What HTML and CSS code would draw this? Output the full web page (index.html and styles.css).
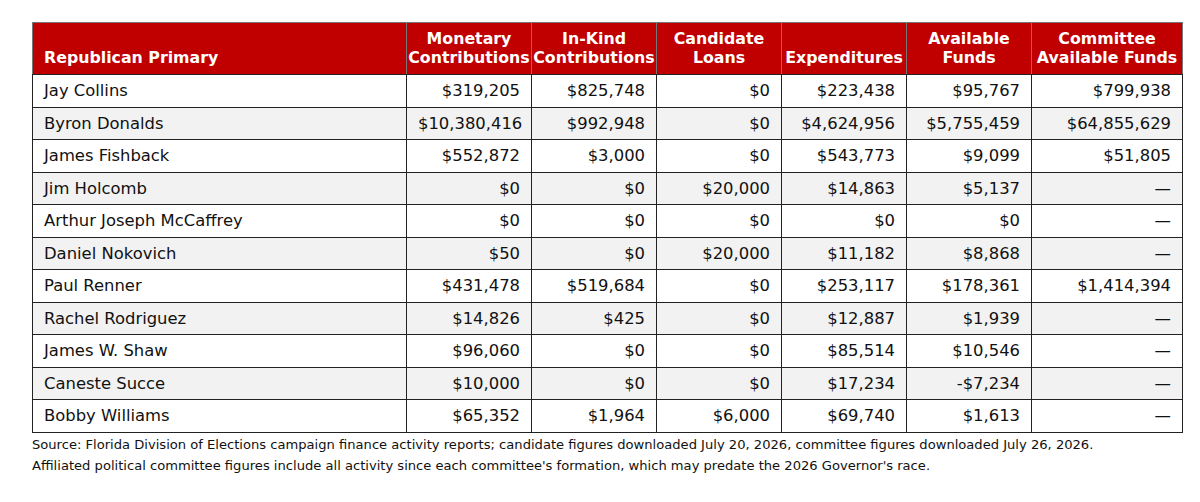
FILE: index.html
```html
<!DOCTYPE html>
<html>
<head>
    <meta name="viewport" content="width=device-width, initial-scale=1.0">
    <link rel="stylesheet" href="styles.css">
</head>
<body>
    <div class="wrap">
        <table class="finance">
            <colgroup>
                <col class="col-name">
                <col class="col-num">
                <col class="col-num">
                <col class="col-num">
                <col class="col-num">
                <col class="col-num">
                <col class="col-wide">
            </colgroup>
            <thead>
                <tr>
                    <th class="name">Republican Primary</th>
                    <th>Monetary<br>Contributions</th>
                    <th>In-Kind<br>Contributions</th>
                    <th>Candidate<br>Loans</th>
                    <th>Expenditures</th>
                    <th>Available<br>Funds</th>
                    <th>Committee<br>Available Funds</th>
                </tr>
            </thead>
            <tbody>
                <tr><td>Jay Collins</td><td>$319,205</td><td>$825,748</td><td>$0</td><td>$223,438</td><td>$95,767</td><td>$799,938</td></tr>
                <tr><td>Byron Donalds</td><td>$10,380,416</td><td>$992,948</td><td>$0</td><td>$4,624,956</td><td>$5,755,459</td><td>$64,855,629</td></tr>
                <tr><td>James Fishback</td><td>$552,872</td><td>$3,000</td><td>$0</td><td>$543,773</td><td>$9,099</td><td>$51,805</td></tr>
                <tr><td>Jim Holcomb</td><td>$0</td><td>$0</td><td>$20,000</td><td>$14,863</td><td>$5,137</td><td>—</td></tr>
                <tr><td>Arthur Joseph McCaffrey</td><td>$0</td><td>$0</td><td>$0</td><td>$0</td><td>$0</td><td>—</td></tr>
                <tr><td>Daniel Nokovich</td><td>$50</td><td>$0</td><td>$20,000</td><td>$11,182</td><td>$8,868</td><td>—</td></tr>
                <tr><td>Paul Renner</td><td>$431,478</td><td>$519,684</td><td>$0</td><td>$253,117</td><td>$178,361</td><td>$1,414,394</td></tr>
                <tr><td>Rachel Rodriguez</td><td>$14,826</td><td>$425</td><td>$0</td><td>$12,887</td><td>$1,939</td><td>—</td></tr>
                <tr><td>James W. Shaw</td><td>$96,060</td><td>$0</td><td>$0</td><td>$85,514</td><td>$10,546</td><td>—</td></tr>
                <tr><td>Caneste Succe</td><td>$10,000</td><td>$0</td><td>$0</td><td>$17,234</td><td>-$7,234</td><td>—</td></tr>
                <tr><td>Bobby Williams</td><td>$65,352</td><td>$1,964</td><td>$6,000</td><td>$69,740</td><td>$1,613</td><td>—</td></tr>
            </tbody>
        </table>
        <p class="note">Source: Florida Division of Elections campaign finance activity reports; candidate figures downloaded July 20, 2026, committee figures downloaded July 26, 2026.</p>
        <p class="note">Affiliated political committee figures include all activity since each committee's formation, which may predate the 2026 Governor's race.</p>
    </div>
</body>
</html>
```

FILE: styles.css
```css
* {
    box-sizing: border-box;
    margin: 0;
    padding: 0;
}

body {
    font-family: "DejaVu Sans", Verdana, sans-serif;
    background-color: #fff;
    color: #111;
}

.wrap {
    padding: 22px 18px 0 32px;
}

.finance {
    width: 1150px;
    border-collapse: collapse;
    table-layout: fixed;
    margin-bottom: 1px;
}

.col-name {
    width: 374px;
}

.col-num {
    width: 125px;
}

.col-wide {
    width: 151px;
}

.finance th {
    background-color: #c00000;
    color: #fff;
    font-size: 15.8px;
    font-weight: bold;
    line-height: 19px;
    height: 52px;
    padding: 0 1px 7px;
    text-align: center;
    vertical-align: bottom;
    border: 1px solid #777;
    border-bottom-color: #222;
    border-left-color: #222;
}

.finance th.name {
    text-align: left;
    padding-left: 11px;
    border-left-color: #777;
}

.finance td {
    font-size: 16.4px;
    height: 32.5px;
    padding: 0 11px;
    text-align: right;
    border: 1px solid #222;
    white-space: nowrap;
}

.finance td:first-child {
    text-align: left;
}

.finance tbody tr:nth-child(even) td {
    background-color: #f2f2f2;
}

.note {
    font-size: 13.1px;
    line-height: 21px;
    color: #111;
}
```
